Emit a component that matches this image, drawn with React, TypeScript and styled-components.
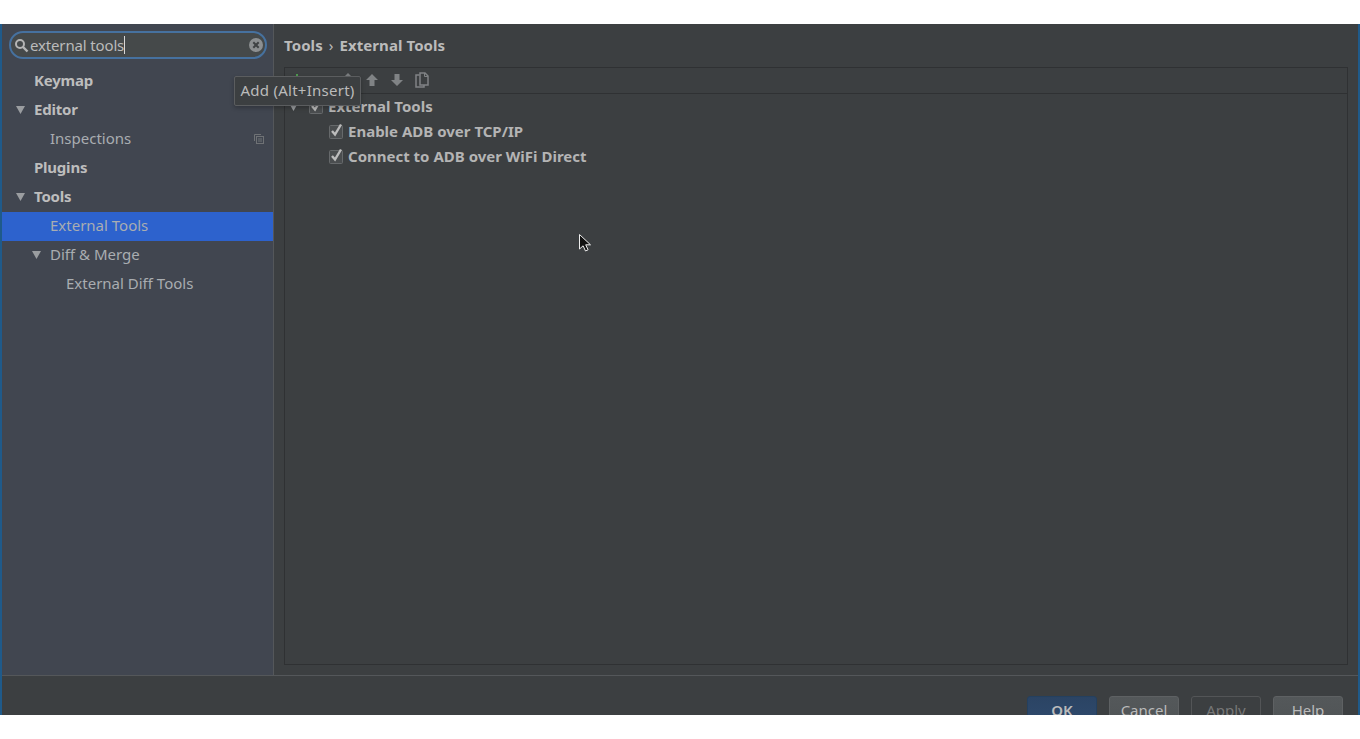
import React from "react";
import styled, { createGlobalStyle } from "styled-components";

const Global = createGlobalStyle`
  html, body { margin: 0; padding: 0; background: #fff; }
  body { font-family: "Noto Sans", "Open Sans", sans-serif; }
  #root { height: 739px; overflow: hidden; }
`;

const Page = styled.div`
  height: 739px;
  padding-top: 24px;
  box-sizing: border-box;
  background: #fff;
`;

const Dialog = styled.div`
  position: relative;
  height: 691px;
  overflow: hidden;
  background: #3c3f41;
  border-left: 2px solid #1f5a8a;
  border-right: 2px solid #1f5a8a;
  box-sizing: border-box;
`;

const Body = styled.div`
  display: flex;
  height: 651px;
`;

const Sidebar = styled.aside`
  width: 272px;
  flex: none;
  background: #414650;
  border-right: 1px solid #54575a;
  box-sizing: border-box;
`;

const SearchWrap = styled.div`
  height: 43px;
  padding: 7px 6px 0 7px;
  box-sizing: border-box;
`;

const SearchBox = styled.div`
  height: 28px;
  width: 258px;
  box-sizing: border-box;
  border: 2px solid #46719f;
  border-radius: 14px;
  background: #45494a;
  display: flex;
  align-items: center;
  padding: 0 2px 0 3px;
  gap: 1px;
  color: #bbbbbb;
  font-size: 15px;
`;

const SearchText = styled.span`
  flex: 1;
  display: flex;
  align-items: center;
  line-height: 20px;
  letter-spacing: -0.01em;
`;

const Caret = styled.span`
  display: inline-block;
  width: 1px;
  height: 18px;
  background: #d8d8d8;
`;

const Row = styled.div<{ $level: number; $selected?: boolean }>`
  height: 29px;
  box-sizing: border-box;
  display: flex;
  align-items: center;
  position: relative;
  padding-left: ${(p) => 32 + p.$level * 16}px;
  padding-bottom: 4px;
  background: ${(p) => (p.$selected ? "#2d62cd" : "transparent")};
  color: #bbbbbb;
  font-size: 15px;
`;

const RowLabel = styled.span<{ $bold?: boolean }>`
  font-weight: ${(p) => (p.$bold ? 700 : 400)};
  letter-spacing: ${(p) => (p.$bold ? "-0.015em" : "0")};
  color: ${(p) => (p.$bold ? "#bdbdbd" : "#a9adb1")};
`;

const Arrow = styled.svg<{ $level: number }>`
  position: absolute;
  left: ${(p) => 14 + p.$level * 16}px;
  top: 10px;
`;

const CopyMark = styled.svg`
  position: absolute;
  right: 9px;
  top: 9px;
`;

const Content = styled.main`
  flex: 1;
  min-width: 0;
  padding: 0 10px 10px 10px;
  display: flex;
  flex-direction: column;
`;

const Crumb = styled.div`
  height: 43px;
  box-sizing: border-box;
  padding-bottom: 2px;
  display: flex;
  align-items: center;
  font-size: 15px;
  font-weight: 700;
  letter-spacing: 0.005em;
  color: #bbbbbb;
  gap: 6px;
`;

const Sep = styled.span`
  font-weight: 400;
`;

const Frame = styled.div`
  flex: 1;
  border: 1px solid #2f3133;
  display: flex;
  flex-direction: column;
`;

const Toolbar = styled.div`
  height: 26px;
  box-sizing: border-box;
  flex: none;
  border-bottom: 1px solid #2f3133;
  position: relative;
  display: flex;
  align-items: center;
  padding: 0 0 2px 4px;
  gap: 9px;
`;

const ToolSlot = styled.span`
  width: 16px;
  height: 16px;
  display: flex;
  align-items: center;
  justify-content: center;
`;

const TreeRow = styled.div<{ $indent: number }>`
  height: 25px;
  box-sizing: border-box;
  padding-bottom: 2px;
  display: flex;
  align-items: center;
  position: relative;
  padding-left: ${(p) => p.$indent}px;
  gap: 4px;
  font-size: 15px;
  font-weight: 700;
  color: #b4b4b4;
`;

const Check = styled.svg`
  flex: none;
`;

const TreeArrow = styled.svg`
  position: absolute;
  left: 4px;
  top: 9px;
`;

const Footer = styled.footer`
  height: 70px;
  box-sizing: border-box;
  border-top: 1px solid #54575a;
  display: flex;
  justify-content: flex-end;
  gap: 12px;
  padding: 20px 15px 0 0;
`;

const Button = styled.button<{ $variant?: "primary" | "disabled" }>`
  width: 70px;
  height: 30px;
  box-sizing: border-box;
  padding: 0 0 2px;
  border-radius: 3px;
  font-family: "Noto Sans", "Open Sans", sans-serif;
  font-size: 15px;
  font-weight: ${(p) => (p.$variant === "primary" ? 600 : 400)};
  color: ${(p) => (p.$variant === "disabled" ? "#777777" : "#bbbbbb")};
  border: 1px solid
    ${(p) => (p.$variant === "primary" ? "#24405f" : p.$variant === "disabled" ? "#535557" : "#5e6163")};
  background: ${(p) =>
    p.$variant === "primary"
      ? "linear-gradient(#2b4464, #2f4a6d)"
      : p.$variant === "disabled"
        ? "#3c3f41"
        : "linear-gradient(#54585a, #505456)"};
`;

const Tooltip = styled.div`
  position: absolute;
  left: 232px;
  top: 52px;
  height: 30px;
  width: 127px;
  box-sizing: border-box;
  padding-bottom: 2px;
  background: #3c3f41;
  border: 1px solid #5b5d5f;
  border-radius: 2px;
  box-shadow: 0 2px 4px rgba(0, 0, 0, 0.25);
  color: #bbbbbb;
  font-size: 15px;
  letter-spacing: 0.26px;
  display: flex;
  align-items: center;
  justify-content: center;
  white-space: nowrap;
`;

const Cursor = styled.svg`
  position: absolute;
  left: 576px;
  top: 209px;
`;

const ArrowDown = ({ level }: { level: number }) => (
  <Arrow $level={level} width="9" height="8" viewBox="0 0 9 8">
    <path d="M0 0h9L4.5 8z" fill="#9a9da0" />
  </Arrow>
);

const CheckBox = () => (
  <Check width="15" height="16" viewBox="0 0 15 16">
    <rect x="0.5" y="2.5" width="13" height="13" rx="1" fill="#4a4d4f" stroke="#66696b" />
    <path d="M3 8l3 3.5L12 1.5" fill="none" stroke="#bcbcbc" strokeWidth="2.4" />
  </Check>
);

export default function App() {
  return (
    <Page>
      <Global />
      <Dialog>
        <Body>
          <Sidebar>
            <SearchWrap>
              <SearchBox>
                <svg width="15" height="15" viewBox="0 0 15 15">
                  <circle cx="6" cy="6" r="4" fill="none" stroke="#b5b5b5" strokeWidth="2" />
                  <path d="M9 9l4.5 4.5" stroke="#b5b5b5" strokeWidth="2.4" />
                </svg>
                <SearchText>
                  external tools
                  <Caret />
                </SearchText>
                <svg width="14" height="14" viewBox="0 0 14 14">
                  <circle cx="7" cy="7" r="7" fill="#8c8f91" />
                  <path d="M4.3 4.3l5.4 5.4M9.7 4.3l-5.4 5.4" stroke="#3f4244" strokeWidth="2" />
                </svg>
              </SearchBox>
            </SearchWrap>
            <Row $level={0}>
              <RowLabel $bold>Keymap</RowLabel>
            </Row>
            <Row $level={0}>
              <ArrowDown level={0} />
              <RowLabel $bold>Editor</RowLabel>
            </Row>
            <Row $level={1}>
              <RowLabel>Inspections</RowLabel>
              <CopyMark width="10" height="10" viewBox="0 0 10 10">
                <path d="M0.5 7V0.5H7" fill="none" stroke="#6f7275" />
                <rect x="2.5" y="2.5" width="7" height="7" fill="none" stroke="#6f7275" />
                <path d="M4 5h4M4 7h4" stroke="#6f7275" />
              </CopyMark>
            </Row>
            <Row $level={0}>
              <RowLabel $bold>Plugins</RowLabel>
            </Row>
            <Row $level={0}>
              <ArrowDown level={0} />
              <RowLabel $bold>Tools</RowLabel>
            </Row>
            <Row $level={1} $selected>
              <RowLabel>External Tools</RowLabel>
            </Row>
            <Row $level={1}>
              <ArrowDown level={1} />
              <RowLabel>Diff &amp; Merge</RowLabel>
            </Row>
            <Row $level={2}>
              <RowLabel>External Diff Tools</RowLabel>
            </Row>
          </Sidebar>
          <Content>
            <Crumb>
              <span>Tools</span>
              <Sep>›</Sep>
              <span>External Tools</span>
            </Crumb>
            <Frame>
              <Toolbar>
                <ToolSlot>
                  <svg width="16" height="16" viewBox="0 0 16 16">
                    <path d="M8 2v12M2 8h12" stroke="#4e9a4e" strokeWidth="2" />
                  </svg>
                </ToolSlot>
                <ToolSlot />
                <ToolSlot>
                  <svg width="16" height="16" viewBox="0 0 16 16">
                    <path d="M9 1l3 3H6z" fill="#7b7e80" />
                  </svg>
                </ToolSlot>
                <ToolSlot>
                  <svg width="14" height="14" viewBox="0 0 14 14">
                    <path d="M7 1l6 6H9.5v6h-5V7H1z" fill="#808385" />
                  </svg>
                </ToolSlot>
                <ToolSlot>
                  <svg width="14" height="14" viewBox="0 0 14 14">
                    <path d="M7 13l6-6H9.5V1h-5v6H1z" fill="#808385" />
                  </svg>
                </ToolSlot>
                <ToolSlot>
                  <svg width="16" height="16" viewBox="0 0 16 16">
                    <path d="M5.5 3H2v12h8v-2" fill="none" stroke="#808385" strokeWidth="1.5" />
                    <path d="M6 1h5l3 3v9H6z" fill="none" stroke="#808385" strokeWidth="1.5" />
                    <path d="M10.5 1v3.5H14" fill="none" stroke="#808385" />
                  </svg>
                </ToolSlot>
              </Toolbar>
              <div>
                <TreeRow $indent={24}>
                  <TreeArrow width="9" height="8" viewBox="0 0 9 8">
                    <path d="M0 0h9L4.5 8z" fill="#9a9da0" />
                  </TreeArrow>
                  <CheckBox />
                  External Tools
                </TreeRow>
                <TreeRow $indent={44}>
                  <CheckBox />
                  Enable ADB over TCP/IP
                </TreeRow>
                <TreeRow $indent={44}>
                  <CheckBox />
                  Connect to ADB over WiFi Direct
                </TreeRow>
              </div>
            </Frame>
          </Content>
        </Body>
        <Footer>
          <Button $variant="primary">OK</Button>
          <Button>Cancel</Button>
          <Button $variant="disabled">Apply</Button>
          <Button>Help</Button>
        </Footer>
        <Tooltip>Add (Alt+Insert)</Tooltip>
        <Cursor width="14" height="20" viewBox="0 0 14 20">
          <path d="M1.5 1.5V16l3.6-3.2 2.4 5.2 2.6-1.2-2.4-5H12.5z" fill="#111" stroke="#eee" strokeWidth="1" />
        </Cursor>
      </Dialog>
    </Page>
  );
}
